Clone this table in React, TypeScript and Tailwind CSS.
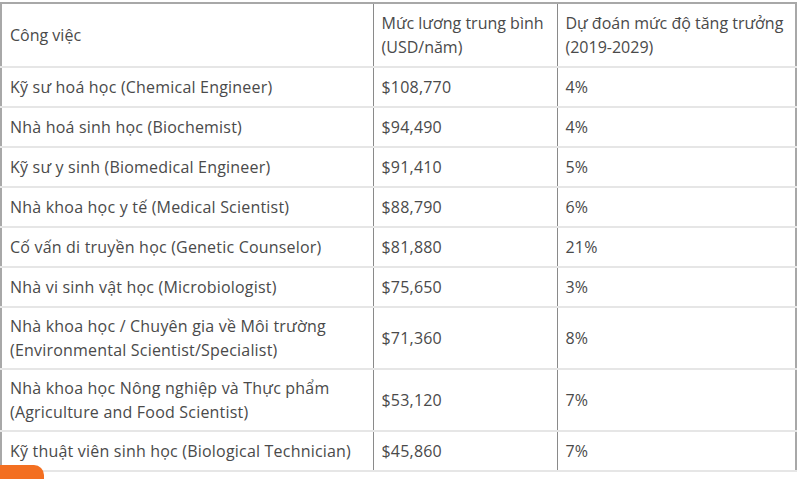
const rows: [string[], string, string][] = [
  [["Kỹ sư hoá học (Chemical Engineer)"], "$108,770", "4%"],
  [["Nhà hoá sinh học (Biochemist)"], "$94,490", "4%"],
  [["Kỹ sư y sinh (Biomedical Engineer)"], "$91,410", "5%"],
  [["Nhà khoa học y tế (Medical Scientist)"], "$88,790", "6%"],
  [["Cố vấn di truyền học (Genetic Counselor)"], "$81,880", "21%"],
  [["Nhà vi sinh vật học (Microbiologist)"], "$75,650", "3%"],
  [["Nhà khoa học / Chuyên gia về Môi trường", "(Environmental Scientist/Specialist)"], "$71,360", "8%"],
  [["Nhà khoa học Nông nghiệp và Thực phẩm", "(Agriculture and Food Scientist)"], "$53,120", "7%"],
  [["Kỹ thuật viên sinh học (Biological Technician)"], "$45,860", "7%"],
];

export default function App() {
  return (
    <div
      className="relative w-[799px] h-[479px] overflow-hidden bg-white pt-[2px]"
      style={{ fontFamily: '"Open Sans", "Liberation Sans", sans-serif' }}
    >
      <table className="w-[797px] table-fixed border-collapse border-l-2 border-t-2 border-r-2 border-[#a8a8a8] text-[16px] leading-[24px] text-[#4a4a4a]">
        <colgroup>
          <col className="w-[372px]" />
          <col className="w-[184px]" />
          <col />
        </colgroup>
        <thead>
          <tr className="border-b-2 border-[#e6e6e6]">
            <th className="h-[64px] px-2 text-left font-normal align-middle">Công việc</th>
            <th className="px-2 text-left font-normal border-l border-[#8a8a8a] align-middle whitespace-nowrap">
              Mức lương trung bình
              <br />
              (USD/năm)
            </th>
            <th className="px-2 text-left font-normal border-l border-[#8a8a8a] align-middle whitespace-nowrap">
              Dự đoán mức độ tăng trưởng
              <br />
              (2019-2029)
            </th>
          </tr>
        </thead>
        <tbody className="tracking-[0.2px]">
          {rows.map(([job, salary, growth], i) => (
            <tr key={i} className="border-b-2 border-[#e6e6e6]">
              <td className={`${job.length > 1 ? "h-[62px]" : "h-[40px]"} px-2 align-middle whitespace-nowrap`}>
                {job.map((l, j) => (
                  <div key={j}>{l}</div>
                ))}
              </td>
              <td className="px-2 border-l border-[#8a8a8a] align-middle">{salary}</td>
              <td className="px-2 border-l border-[#8a8a8a] align-middle">{growth}</td>
            </tr>
          ))}
        </tbody>
      </table>
      <div className="absolute left-0 top-[465px] w-[44px] h-[20px] bg-[#f36f21] rounded-tr-[10px]" />
    </div>
  );
}
